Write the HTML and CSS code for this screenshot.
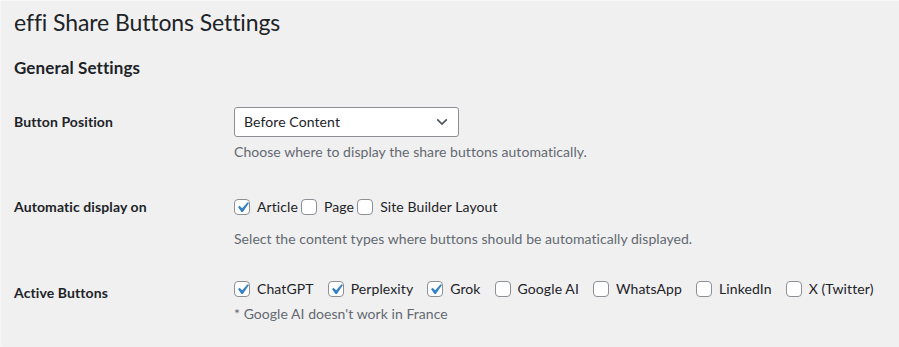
FILE: index.html
```html
<!DOCTYPE html>
<html lang="en">
<head>
<meta charset="utf-8">
<title>effi Share Buttons Settings</title>
<link rel="stylesheet" href="styles.css">
</head>
<body>
<div class="wrap">
  <h1 class="title">effi Share Buttons Settings</h1>
  <h2 class="section">General Settings</h2>

  <div class="row row-position">
    <div class="th">Button Position</div>
    <div class="td">
      <div class="select">
        <span>Before Content</span>
        <svg class="chev" width="12" height="8" viewBox="0 0 12 8"><path d="M1.2 1.4 6 6 10.8 1.4" fill="none" stroke="#50575e" stroke-width="1.7"/></svg>
      </div>
      <p class="desc desc-select">Choose where to display the share buttons automatically.</p>
    </div>
  </div>

  <div class="row row-display">
    <div class="th">Automatic display on</div>
    <div class="td">
      <div class="checks tight">
        <label class="opt"><span class="cb on"><svg viewBox="0 0 20 20"><path d="M14.83 4.89l1.34.94-5.81 8.38H9.02L5.78 9.67l1.34-1.25 2.57 2.4z"/></svg></span>Article</label>
        <label class="opt"><span class="cb"></span>Page</label>
        <label class="opt"><span class="cb"></span>Site Builder Layout</label>
      </div>
      <p class="desc desc-checks">Select the content types where buttons should be automatically displayed.</p>
    </div>
  </div>

  <div class="row row-active">
    <div class="th th-active">Active Buttons</div>
    <div class="td">
      <div class="checks wide">
        <label class="opt"><span class="cb on"><svg viewBox="0 0 20 20"><path d="M14.83 4.89l1.34.94-5.81 8.38H9.02L5.78 9.67l1.34-1.25 2.57 2.4z"/></svg></span>ChatGPT</label>
        <label class="opt"><span class="cb on"><svg viewBox="0 0 20 20"><path d="M14.83 4.89l1.34.94-5.81 8.38H9.02L5.78 9.67l1.34-1.25 2.57 2.4z"/></svg></span>Perplexity</label>
        <label class="opt"><span class="cb on"><svg viewBox="0 0 20 20"><path d="M14.83 4.89l1.34.94-5.81 8.38H9.02L5.78 9.67l1.34-1.25 2.57 2.4z"/></svg></span>Grok</label>
        <label class="opt"><span class="cb"></span>Google AI</label>
        <label class="opt"><span class="cb"></span>WhatsApp</label>
        <label class="opt"><span class="cb"></span>LinkedIn</label>
        <label class="opt"><span class="cb"></span>X (Twitter)</label>
      </div>
      <p class="desc desc-note">* Google AI doesn't work in France</p>
    </div>
  </div>
</div>
</body>
</html>
```
FILE: styles.css
```css
html, body {
  margin: 0;
  padding: 0;
  background: #f0f0f1;
}
body {
  font-family: Lato, "Open Sans", sans-serif;
  font-size: 14px;
  font-variant-ligatures: none;
  letter-spacing: 0.1px;
  color: #1d2327;
  border-top: 1px solid #f7f7f7;
  border-left: 1px solid #f7f7f7;
  min-height: 346px;
  box-sizing: border-box;
}
.wrap {
  padding: 6px 0 0 13px;
}
.title {
  margin: 0;
  font-size: 23px;
  font-weight: 400;
  line-height: 30px;
  letter-spacing: -0.1px;
}
.section {
  margin: 20px 0 0;
  font-size: 17px;
  font-weight: 700;
  line-height: 22px;
}
.row {
  display: grid;
  grid-template-columns: 220px 1fr;
}
.row-position { padding-top: 28px; }
.row-display { padding-top: 35px; }
.row-active { padding-top: 30px; }
.th {
  font-weight: 700;
  line-height: 20px;
}
.row-position .th { padding-top: 5px; }
.th-active { padding-top: 4px; }
.select {
  box-sizing: border-box;
  width: 225px;
  height: 30px;
  background: #fff;
  border: 1px solid #8c8f94;
  border-radius: 3px;
  display: flex;
  align-items: center;
  justify-content: space-between;
  padding: 0 10px 0 9px;
  line-height: 20px;
}
.chev { display: block; }
.desc {
  margin: 0;
  color: #646970;
  line-height: 20px;
  letter-spacing: 0.05px;
}
.desc-select { margin-top: 5px; }
.desc-checks { margin-top: 12px; }
.desc-note { margin-top: 5px; }
.checks {
  display: flex;
  line-height: 20px;
}
.tight { gap: 3px; }
.wide { gap: 14px; }
.opt {
  display: inline-flex;
  align-items: center;
  gap: 7px;
}
.cb {
  position: relative;
  box-sizing: border-box;
  width: 16px;
  height: 16px;
  background: #fff;
  border: 1px solid #8c8f94;
  border-radius: 4px;
  flex: none;
}
.cb svg {
  position: absolute;
  left: -3px;
  top: -3px;
  width: 21px;
  height: 21px;
  fill: #3582c4;
}
```
